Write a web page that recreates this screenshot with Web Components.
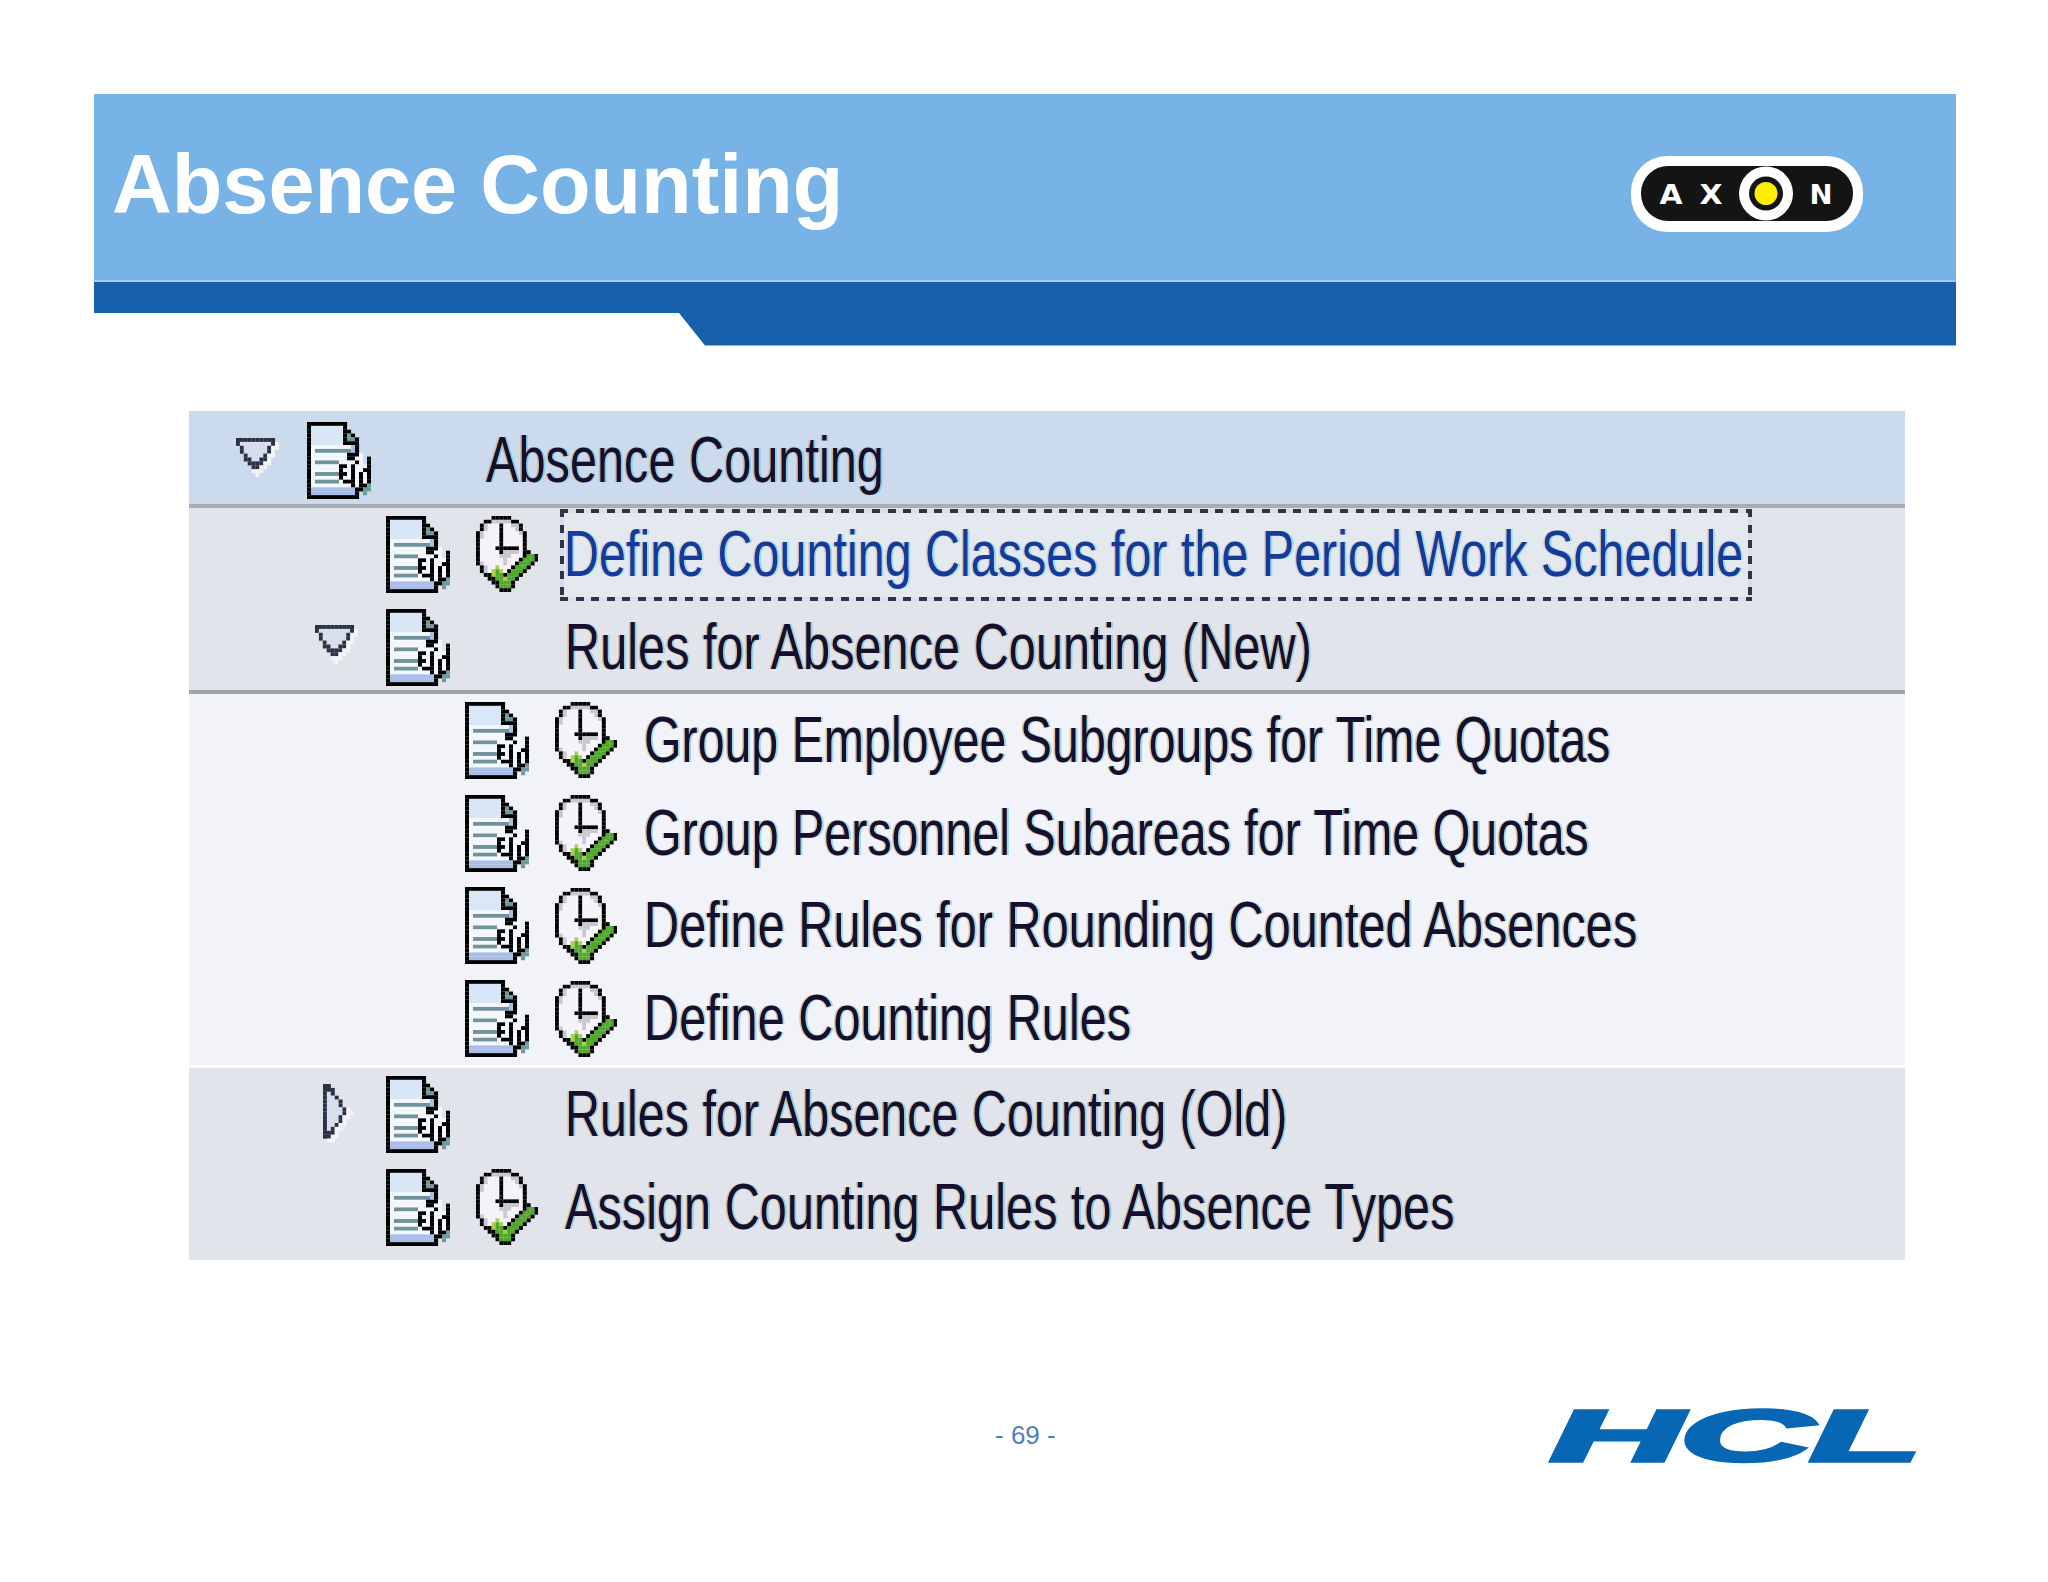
<!DOCTYPE html>
<html>
<head>
<meta charset="utf-8">
<title>Absence Counting</title>
<style>
  html, body { margin: 0; padding: 0; background: #fff; }
  body { width: 2048px; height: 1582px; overflow: hidden; font-family: "Liberation Sans", Arial, sans-serif; }
</style>
</head>
<body>
  <slide-page>
    <slide-header slot="header">Absence Counting</slide-header>
    <tree-section tone="head">
      <tree-row arrow="down" depth="0">Absence Counting</tree-row>
    </tree-section>
    <tree-section tone="grey" line>
      <tree-row depth="1" clock focus squeeze=".7457">Define Counting Classes for the Period Work Schedule</tree-row>
      <tree-row depth="1" arrow="down">Rules for Absence Counting (New)</tree-row>
    </tree-section>
    <tree-section tone="light">
      <tree-row depth="2" clock squeeze=".743">Group Employee Subgroups for Time Quotas</tree-row>
      <tree-row depth="2" clock squeeze=".745">Group Personnel Subareas for Time Quotas</tree-row>
      <tree-row depth="2" clock>Define Rules for Rounding Counted Absences</tree-row>
      <tree-row depth="2" clock>Define Counting Rules</tree-row>
    </tree-section>
    <tree-section tone="grey" last>
      <tree-row depth="1" arrow="right" squeeze=".746">Rules for Absence Counting (Old)</tree-row>
      <tree-row depth="1" clock>Assign Counting Rules to Absence Types</tree-row>
    </tree-section>
    <slide-footer slot="footer">- 69 -</slide-footer>
  </slide-page>

<script>
// pixel maps, one char per source pixel. the screenshot is an upscaled SAP tree
const SPRITES = {
  doc: { cell: [4, 3.85], map: [
    "KKKKKKKKKK......",
    "KPPPPPPPPK......",
    "KPPPPPPPPKK.....",
    "KPPPPPPPPKGK....",
    "KPPPPPPPPKGGK...",
    "KPPPPPPPPKKKK...",
    "KWWWWWWWWWWLK...",
    "KWTTTTTTTTTLK...",
    "KWWWWWWWWWKKKW..",
    "KWWWWWWWWWKKWW.K",
    "KWTTTTTTWWWWKW.K",
    "KWWWWWWWKKWKWWWK",
    "KWWWWWWWKWWKWWKK",
    "KWTTTTTTKKWKWKWK",
    "KWWWWWWWKWWKWKWK",
    "KWTTTTTTWKKKWKWK",
    "KWWWWWWWWWWKWKKG",
    "KLLLLLLLLLLLKKGG",
    "KLLLLLLLLLLLK.G.",
    "KKKKKKKKKKKKK..."
  ]},
  clock: { cell: [3.9, 3.8], map: [
    "....KKKKK.......",
    "..KKCCCCCKK.....",
    ".KCWWWKWWCCK....",
    ".KCWWWKWWWCK....",
    "KCWWWWKWWWWCK...",
    "KCWWWWKWWWWWK...",
    "KWWWWWKWWWWWK...",
    "KWWWWWKWWWWWK...",
    "KWWWWKKKKKKWK...",
    "KWWWWWKCCCCWKK..",
    "KWWWWWCCCWWWKGGK",
    "KWWWWWWCWWWKGGGK",
    "KCWWWWWCWWKGGGK.",
    ".KCWWLWWWKGGGK..",
    ".KCWLGLWKGGGK...",
    "..KKLGGKGGGK....",
    "...KKGGLGGK.....",
    "....KKGGGK......",
    ".....KGGGK......",
    "......KKK......."
  ]},
  down: { cell: [3.9, 3.9], map: [
    "KKKKKKKKKK..",
    "KFFFFFFFFKS.",
    ".KFFFFFFKSS.",
    ".KFFFFFFKS..",
    "..KFFFFKSS..",
    "..KKFFKKS...",
    "...KKKKSS...",
    "....KKSS....",
    "....SSS.....",
    ".....S......"
  ]},
  right: { cell: [3.9, 3.9], map: [
    "KK......",
    "KKK.....",
    "KFK.....",
    "KFFK....",
    "KFFFK...",
    "KFFFK...",
    "KFFFFKS.",
    "KFFFFKSS",
    "KFFFKSS.",
    "KFFFKS..",
    "KFFKSS..",
    "KFKSS...",
    "KKKS....",
    "KKSS....",
    ".SS....."
  ]}
};

const COLORS = {
  K: "#000", P: "#d8e6f8", W: "#f4f7fc", T: "#6f929b", G: "#6f9a9c", L: "#a9bde6",
  C: "#c9c6d2", F: "#d7deee", S: "#f3f5f9"
};
const CLOCK_COLORS = { W: "#f6f4fa", G: "#4fa82a", L: "#a8d24e" };
const TRI_COLORS = { K: "#2b3045" };

class PixelIcon extends HTMLElement {
  connectedCallback() {
    const kind = this.getAttribute("kind");
    const { cell, map } = SPRITES[kind];
    const over = kind === "clock" ? CLOCK_COLORS : (kind === "down" || kind === "right") ? TRI_COLORS : {};
    let rects = "";
    map.forEach((line, y) => {
      [...line].forEach((ch, x) => {
        if (ch === ".") return;
        rects += `<rect x="${x}" y="${y}" width="1.02" height="1.02" fill="${over[ch] || COLORS[ch]}"/>`;
      });
    });
    const w = map[0].length, h = map.length;
    this.attachShadow({ mode: "open" }).innerHTML = `
      <style>
        :host { display: block; line-height: 0; }
        svg { display: block; filter: blur(0.6px); }
      </style>
      <svg width="${w * cell[0]}" height="${h * cell[1]}" viewBox="0 0 ${w} ${h}" preserveAspectRatio="none">${rects}</svg>`;
  }
}
customElements.define("pixel-icon", PixelIcon);

class AxonLogo extends HTMLElement {
  connectedCallback() {
    this.attachShadow({ mode: "open" }).innerHTML = `
      <style>
        :host { display: block; line-height: 0; }
        svg { display: block; }
        text { font: bold 27px "DejaVu Sans", sans-serif; fill: #fff; text-anchor: middle; }
      </style>
      <svg width="232" height="76" viewBox="0 0 232 76">
        <rect x="0" y="0" width="232" height="76" rx="36" fill="#fff"/>
        <rect x="10" y="10" width="212" height="55" rx="27" fill="#141414"/>
        <circle cx="135" cy="37.5" r="27" fill="#fff"/>
        <circle cx="135" cy="37.5" r="17" fill="#141414"/>
        <circle cx="135" cy="37.5" r="11.5" fill="#ffee00"/>
        <text x="40" y="47.5" textLength="23" lengthAdjust="spacingAndGlyphs">A</text>
        <text x="80" y="47.5" textLength="23" lengthAdjust="spacingAndGlyphs">X</text>
        <text x="190" y="47.5" textLength="23" lengthAdjust="spacingAndGlyphs">N</text>
      </svg>`;
  }
}
customElements.define("axon-logo", AxonLogo);

class SlideHeader extends HTMLElement {
  constructor() {
    super();
    this.attachShadow({ mode: "open" }).innerHTML = `
      <style>
        :host { display: block; width: 1862px; }
        .top {
          height: 188px; box-sizing: border-box;
          background: #77b3e6; border-bottom: 2px solid #a3caf0;
          display: flex; justify-content: space-between; align-items: flex-start;
          padding: 0 93px 0 18px;
        }
        h1 {
          margin: 43px 0 0; color: #fff;
          font: bold 82.8px/1.15 "Liberation Sans", Arial, sans-serif;
        }
        axon-logo { margin-top: 62px; }
        .band {
          height: 63.5px; background: #1860ac;
          clip-path: polygon(0 0, 100% 0, 100% 100%, 611px 100%, 585px 31px, 0 31px);
        }
      </style>
      <div class="top"><h1><slot></slot></h1><axon-logo></axon-logo></div>
      <div class="band"></div>`;
  }
}
customElements.define("slide-header", SlideHeader);

class TreeSection extends HTMLElement {
  constructor() {
    super();
    this.attachShadow({ mode: "open" }).innerHTML = `
      <style>
        :host { display: block; }
        :host([tone="head"]) { background: #cbdaec; border-bottom: 4px solid #a9adb1; }
        :host([tone="head"]) ::slotted(tree-row) { height: 93px; padding-top: 5px; }
        :host([tone="grey"]) { background: #e1e4ea; }
        :host([line]) { height: 186px; box-sizing: border-box; border-bottom: 4px solid #a1a4a7; }
        :host([tone="light"]) { background: #f1f3f8; }
        :host([last]) { margin-top: 3px; padding-bottom: 6px; }
      </style>
      <slot></slot>`;
  }
}
customElements.define("tree-section", TreeSection);

class TreeRow extends HTMLElement {
  connectedCallback() {
    const depth = Number(this.getAttribute("depth") || 0);
    const arrow = this.getAttribute("arrow");
    const clock = this.hasAttribute("clock");
    const focus = this.hasAttribute("focus");
    const squeeze = this.getAttribute("squeeze") || ".749";
    const root = this.attachShadow({ mode: "open" });
    root.innerHTML = `
      <style>
        :host {
          display: flex; align-items: center; box-sizing: border-box;
          height: 92.8px; padding-left: ${47 + depth * 79}px;
        }
        .arrow { width: 71px; flex: none; margin-top: -5px; }
        .arrow.right { padding-left: 8px; box-sizing: border-box; margin-top: -2px; }
        .doc { flex: none; }
        .clock { width: 60px; margin: 0 29px 0 26px; flex: none; }
        .text {
          flex: none; height: 92px; display: flex; align-items: center; white-space: nowrap;
          box-sizing: border-box;
        }
        .text.focus {
          --ink: #2c3448; --gap: #d9deef;
          width: 1192px; height: 92px; margin: 2px 0 0 -5px;
          border: 4px solid transparent;
          background:
            linear-gradient(#e4e8ef, #e4e8ef) padding-box,
            repeating-linear-gradient(90deg, var(--ink) 0 8px, var(--gap) 8px 15.6px) border-box top / 100% 4px no-repeat,
            repeating-linear-gradient(90deg, var(--ink) 0 8px, var(--gap) 8px 15.6px) border-box bottom / 100% 4px no-repeat,
            repeating-linear-gradient(180deg, var(--ink) 0 8px, var(--gap) 8px 15.6px) border-box left / 4px 100% no-repeat,
            repeating-linear-gradient(180deg, var(--ink) 0 8px, var(--gap) 8px 15.6px) border-box right / 4px 100% no-repeat;
        }
        span {
          display: inline-block; transform: scaleX(${squeeze}); transform-origin: left center;
          margin-top: -2px;
          font: 65px/1 "Liberation Sans", Arial, sans-serif; color: #15102e;
          text-shadow: -2px 0 rgba(214, 150, 70, .55), 2.5px 0 rgba(70, 190, 235, .5);
          filter: blur(.5px);
        }
        .focus span { margin-top: -4px; color: #163a9c; text-shadow: -2px 0 rgba(225, 170, 130, .5), 2.5px 0 rgba(90, 210, 240, .55); }
      </style>
      <div class="arrow ${arrow || ""}">${arrow ? `<pixel-icon kind="${arrow}"></pixel-icon>` : ""}</div>
      <pixel-icon class="doc" kind="doc"></pixel-icon>
      <div class="clock">${clock ? `<pixel-icon kind="clock"></pixel-icon>` : ""}</div>
      <div class="text ${focus ? "focus" : ""}"><span><slot></slot></span></div>`;
  }
}
customElements.define("tree-row", TreeRow);

class SlideFooter extends HTMLElement {
  constructor() {
    super();
    this.attachShadow({ mode: "open" }).innerHTML = `
      <style>
        :host { display: flex; justify-content: space-between; align-items: flex-start; }
        .num {
          margin: 12px 0 0 901px; color: #4d80c0;
          font: 26px/1.15 "Liberation Sans", Arial, sans-serif;
        }
        .hcl {
          width: 368px; height: 58px; overflow: visible; white-space: nowrap;
          margin: -2px 130px 0 0;
        }
        .hcl b {
          display: inline-block; color: #0767b4; letter-spacing: -1px;
          font: italic bold 73px/58px "Liberation Sans", Arial, sans-serif;
          -webkit-text-stroke: 3.5px #0767b4;
          transform: scaleX(2.51); transform-origin: left center;
        }
      </style>
      <div class="num"><slot></slot></div>
      <div class="hcl"><b>HCL</b></div>`;
  }
}
customElements.define("slide-footer", SlideFooter);

class SlidePage extends HTMLElement {
  constructor() {
    super();
    this.attachShadow({ mode: "open" }).innerHTML = `
      <style>
        :host { display: block; padding: 94px 0 0 94px; }
        .tree { width: 1716px; margin: 65.5px 0 0 95px; }
        .foot { margin-top: 149px; }
      </style>
      <slot name="header"></slot>
      <div class="tree"><slot></slot></div>
      <div class="foot"><slot name="footer"></slot></div>`;
  }
}
customElements.define("slide-page", SlidePage);
</script>
</body>
</html>
